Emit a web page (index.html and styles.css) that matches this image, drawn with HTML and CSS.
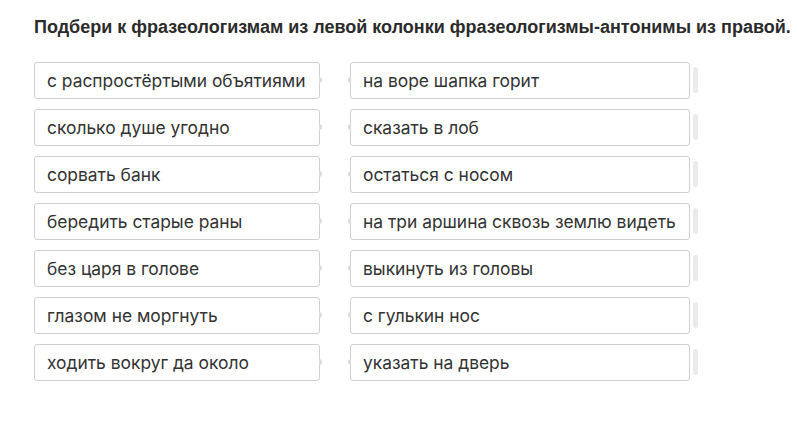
FILE: index.html
```html
<!DOCTYPE html>
<html lang="ru">
<head>
<meta charset="utf-8">
<link rel="stylesheet" href="styles.css">
</head>
<body>
<div class="page">
  <h1 class="title">Подбери к фразеологизмам из левой колонки фразеологизмы-антонимы из правой.</h1>
  <div class="match">
    <div class="col left">
      <div class="item">с распростёртыми объятиями</div>
      <div class="item">сколько душе угодно</div>
      <div class="item">сорвать банк</div>
      <div class="item">бередить старые раны</div>
      <div class="item">без царя в голове</div>
      <div class="item">глазом не моргнуть</div>
      <div class="item">ходить вокруг да около</div>
    </div>
    <div class="col right">
      <div class="item">на воре шапка горит</div>
      <div class="item">сказать в лоб</div>
      <div class="item">остаться с носом</div>
      <div class="item">на три аршина сквозь землю видеть</div>
      <div class="item">выкинуть из головы</div>
      <div class="item">с гулькин нос</div>
      <div class="item">указать на дверь</div>
    </div>
  </div>
</div>
</body>
</html>
```
FILE: styles.css
```css
html, body { margin: 0; padding: 0; background: #fff; }
.page { padding: 15px 0 0 34px; }
.title {
  margin: 0;
  font-family: "Liberation Sans", Arial, sans-serif;
  font-weight: bold;
  font-size: 18px;
  line-height: 24px;
  color: #2b2b2b;
  white-space: nowrap;
}
.match { display: flex; gap: 30px; margin-top: 23px; }
.col { display: flex; flex-direction: column; gap: 10px; }
.left { width: 286px; }
.right { width: 340px; }
.item {
  position: relative;
  box-sizing: border-box;
  height: 37px;
  border: 1px solid #d0d0d0;
  border-radius: 3px;
  padding: 0 12px 1px;
  display: flex;
  align-items: center;
  font-family: Inter, "Noto Sans", sans-serif;
  font-size: 17.4px;
  color: #333;
  white-space: nowrap;
}
.left .item::after {
  content: "";
  position: absolute;
  right: -3px;
  top: 14px;
  width: 3px;
  height: 6px;
  border-radius: 0 3px 3px 0;
  background: #dcdcdc;
}
.right .item::before {
  content: "";
  position: absolute;
  left: -3px;
  top: 14px;
  width: 3px;
  height: 6px;
  border-radius: 3px 0 0 3px;
  background: #dcdcdc;
}
.right .item::after {
  content: "";
  position: absolute;
  right: -9px;
  top: 4px;
  width: 5px;
  height: 26px;
  border-radius: 3px;
  background: #ebebeb;
}
```
